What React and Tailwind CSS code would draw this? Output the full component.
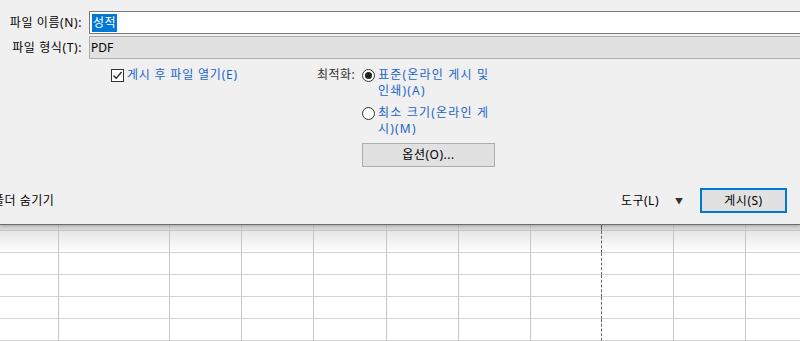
const cols = [
  "border-r border-[#c6c6c6]",
  "border-r border-[#c6c6c6]",
  "border-r border-[#c6c6c6]",
  "border-r border-[#c6c6c6]",
  "border-r border-[#c6c6c6]",
  "border-r border-[#c6c6c6]",
  "border-r border-[#c6c6c6]",
  "border-r border-r-[#666] [border-right-style:dashed]",
  "border-r border-[#c6c6c6]",
  "border-r border-[#c6c6c6]",
  "",
];

function Row({ className }) {
  return (
    <>
      {cols.map((c, i) => (
        <div key={i} className={`${className} ${c}`} />
      ))}
    </>
  );
}

export default function App() {
  return (
    <div className="h-[341px] w-[800px] overflow-hidden bg-white font-['Noto_Sans','Noto_Sans_CJK_KR',sans-serif] text-[12px] text-black">
      {/* Publish dialog */}
      <div className="relative z-10 flex h-[225px] flex-col border-b border-[#6e6e6e] bg-[#f0f0f0] pt-[11px] shadow-[0_1px_3px_rgba(0,0,0,0.25)]">
        <div className="flex items-center">
          <div className="w-[83px] pr-[1px] text-right leading-[23px] tracking-[0.6px]">파일 이름(N):</div>
          <div className="ml-[6px] -mr-2 flex h-[23px] flex-1 items-center border border-[#7a7a7a] bg-white pl-[2px]">
            <span className="bg-[#0078d7] px-[1px] leading-[18px] tracking-[0.5px] text-white">성적</span>
          </div>
        </div>
        <div className="mt-[2px] flex items-center">
          <div className="w-[83px] pr-[1px] text-right leading-[23px] tracking-[0.6px]">파일 형식(T):</div>
          <div className="ml-[6px] -mr-2 flex h-[23px] flex-1 items-center border border-[#adadad] bg-[#e1e1e1] pl-[1px]">
            PDF
          </div>
        </div>

        <div className="flex pl-[111px] pt-[8px]">
          <div className="flex w-[206px] items-start">
            <div className="mt-[2px] flex h-[13px] w-[13px] items-center justify-center border border-[#333] bg-white">
              <svg width="11" height="11" viewBox="0 0 11 11">
                <path d="M1.5 5.5 L4.2 8.3 L9.5 2" fill="none" stroke="#222" strokeWidth="1.3" />
              </svg>
            </div>
            <span className="ml-[3px] leading-[16px] tracking-[0.8px] text-[#1a64c8]">게시 후 파일 열기(E)</span>
          </div>

          <div className="flex items-start">
            <span className="w-[45px] leading-[16px] tracking-[0.5px] text-[#333]">최적화:</span>
            <div className="flex flex-col">
              <div className="flex items-start">
                <div className="mt-[2px] flex h-[13px] w-[13px] items-center justify-center rounded-full border border-[#333] bg-white">
                  <div className="h-[7px] w-[7px] rounded-full bg-[#222]" />
                </div>
                <span className="ml-[3px] leading-[16px] tracking-[1.2px] text-[#1a64c8]">
                  표준(온라인 게시 및
                  <br />
                  인쇄)(A)
                </span>
              </div>
              <div className="mt-[6px] flex items-start">
                <div className="mt-[2px] h-[13px] w-[13px] rounded-full border border-[#333] bg-white" />
                <span className="ml-[3px] leading-[16px] tracking-[1.2px] text-[#1a64c8]">
                  최소 크기(온라인 게
                  <br />
                  시)(M)
                </span>
              </div>
              <button className="mt-[6px] h-[24px] w-[133px] border border-[#adadad] bg-[#e1e1e1] leading-[22px] tracking-[0.5px]">
                옵션(O)...
              </button>
            </div>
          </div>
        </div>

        <div className="mt-auto mb-[11px] flex items-center">
          <span className="-ml-[7px] tracking-[0.5px]">폴더 숨기기</span>
          <span className="ml-auto tracking-[0.5px]">도구(L)</span>
          <span className="ml-[16px] text-[8px] text-[#333]">▼</span>
          <button className="ml-[17px] mr-[13px] h-[25px] w-[87px] border-2 border-[#0078d7] bg-[#e1e1e1] leading-[21px] tracking-[0.5px]">
            게시(S)
          </button>
        </div>
      </div>

      {/* Spreadsheet behind */}
      <div className="grid grid-cols-[59px_111px_72px_72px_73px_72px_72px_71px_72px_72px_1fr]">
        <Row className="h-[6px] border-b border-b-[#c4c4c4] bg-[#d8d8d8]" />
        <Row className="h-[22px] border-b border-b-[#d4d4d4] bg-linear-to-b from-[#e6e6e6] to-white" />
        <Row className="h-[22px] border-b border-b-[#d4d4d4]" />
        <Row className="h-[22px] border-b border-b-[#d4d4d4]" />
        <Row className="h-[22px] border-b border-b-[#d4d4d4]" />
        <Row className="h-[22px] border-b border-b-[#d4d4d4]" />
      </div>
    </div>
  );
}
